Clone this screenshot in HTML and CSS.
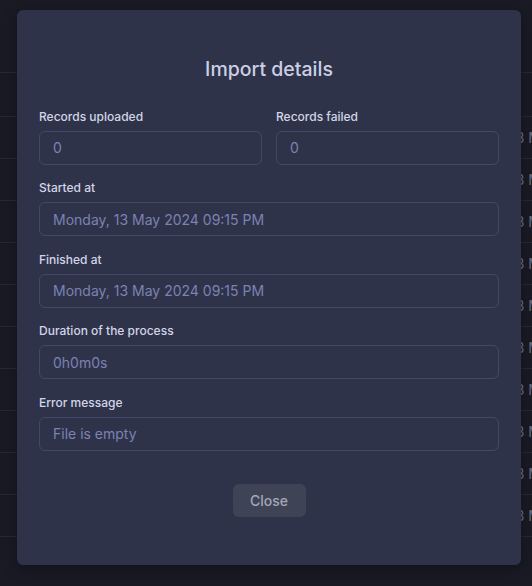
FILE: index.html
```html
<!DOCTYPE html>
<html lang="en">
<head>
<meta charset="utf-8">
<title>Import details</title>
<link rel="stylesheet" href="styles.css">
</head>
<body>
<div class="page">
  <div class="table">
    <div class="top"></div>
    <div class="row head"></div>
    <div class="row"><span class="cell">13 May 2024</span></div>
    <div class="row"><span class="cell">13 May 2024</span></div>
    <div class="row"><span class="cell">13 May 2024</span></div>
    <div class="row"><span class="cell">13 May 2024</span></div>
    <div class="row"><span class="cell">13 May 2024</span></div>
    <div class="row"><span class="cell">13 May 2024</span></div>
    <div class="row"><span class="cell">13 May 2024</span></div>
    <div class="row"><span class="cell">13 May 2024</span></div>
    <div class="row"><span class="cell">13 May 2024</span></div>
    <div class="row"><span class="cell">13 May 2024</span></div>
  </div>
  <div class="modal">
    <h2 class="title">Import details</h2>
    <div class="grid2">
      <div class="field">
        <label class="label">Records uploaded</label>
        <div class="input">0</div>
      </div>
      <div class="field">
        <label class="label">Records failed</label>
        <div class="input">0</div>
      </div>
    </div>
    <div class="field">
      <label class="label">Started at</label>
      <div class="input">Monday, 13 May 2024 09:15 PM</div>
    </div>
    <div class="field">
      <label class="label">Finished at</label>
      <div class="input">Monday, 13 May 2024 09:15 PM</div>
    </div>
    <div class="field">
      <label class="label">Duration of the process</label>
      <div class="input">0h0m0s</div>
    </div>
    <div class="field">
      <label class="label">Error message</label>
      <div class="input">File is empty</div>
    </div>
    <div class="actions">
      <button class="btn">Close</button>
    </div>
  </div>
</div>
</body>
</html>
```
FILE: styles.css
```css
* { box-sizing: border-box; }
html, body {
  margin: 0;
  padding: 0;
  background: #191a24;
  font-family: Inter, "Noto Sans", sans-serif;
}
.page {
  position: relative;
  width: 532px;
  height: 586px;
  overflow: hidden;
}
.table {
  display: flex;
  flex-direction: column;
}
.top {
  height: 73px;
  border-bottom: 1px solid #262835;
}
.row {
  height: 42px;
  border-bottom: 1px solid #262835;
  display: flex;
  align-items: center;
  white-space: nowrap;
}
.row.head { height: 44px; }
.cell {
  padding-left: 510px;
  font-size: 14px;
  color: #6a6d7f;
}
.modal {
  position: absolute;
  left: 17px;
  top: 10px;
  width: 504px;
  height: 555px;
  background: #2f3349;
  border-radius: 6px;
  padding: 45px 22px 0;
  display: flex;
  flex-direction: column;
  gap: 14.5px;
  box-shadow: 0 4px 16px rgba(0,0,0,0.3);
}
.title {
  margin: 0 0 10px;
  text-align: center;
  font-size: 19.5px;
  line-height: 28px;
  font-weight: 500;
  color: #cbcfe5;
}
.grid2 {
  display: grid;
  grid-template-columns: 1fr 1fr;
  gap: 14px;
}
.field {
  display: flex;
  flex-direction: column;
}
.label {
  font-size: 12px;
  line-height: 18px;
  margin-bottom: 5px;
  font-weight: 500;
  color: #d2d5e8;
}
.input {
  height: 34px;
  border: 1px solid #434866;
  border-radius: 6px;
  padding: 0 13px;
  display: flex;
  align-items: center;
  font-size: 14px;
  color: #7b82b4;
}
.actions {
  display: flex;
  justify-content: center;
  margin-top: 19px;
}
.btn {
  width: 73px;
  height: 33px;
  border: none;
  border-radius: 6px;
  background: #3f4356;
  color: #a3a7b9;
  font-family: inherit;
  font-size: 14px;
  font-weight: 500;
  padding: 0;
}
```
